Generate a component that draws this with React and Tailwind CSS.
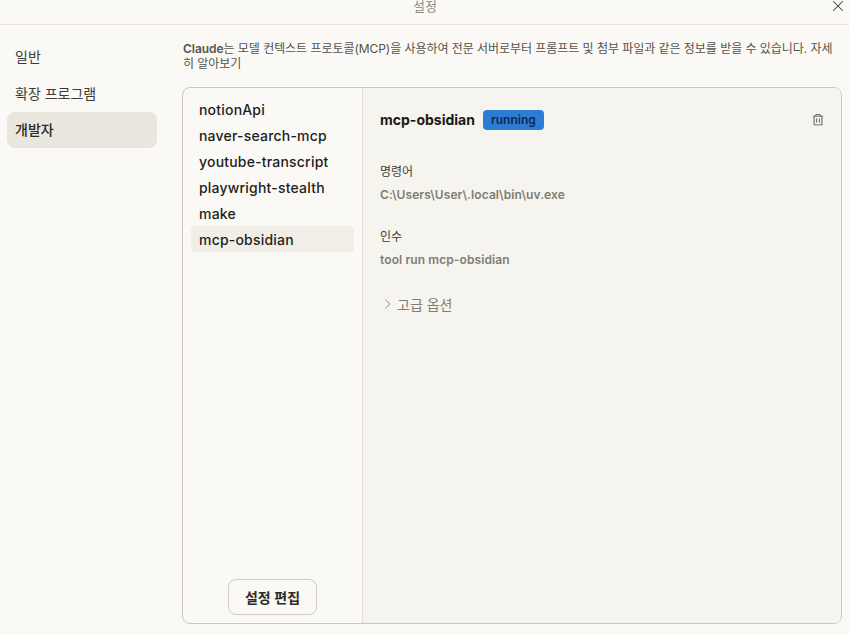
import { PiCaretRightLight, PiTrash, PiXLight } from 'react-icons/pi';

const NAV = ['일반', '확장 프로그램', '개발자'];
const SERVERS = ['notionApi', 'naver-search-mcp', 'youtube-transcript', 'playwright-stealth', 'make', 'mcp-obsidian'];
const FONT = { fontFamily: 'Inter, "Noto Sans CJK KR", sans-serif' };

export default function App() {
  return (
    <div className="h-[635px] w-[849px] overflow-hidden bg-[#faf9f5] text-[#2b2a27]" style={FONT}>
      {/* Title bar */}
      <header className="flex h-[25px] items-center border-b border-[#e6e4dd] pl-[20px]">
        <div className="flex-1 pb-[12px] text-center text-[13px] leading-none text-[#8a8880]">설정</div>
        <PiXLight size={16} className="mb-[12px] mr-[3px] text-[#222]" />
      </header>

      <div className="flex">
        {/* Sidebar */}
        <nav className="ml-[7px] mt-[14px] flex w-[150px] flex-col gap-[0.5px]">
          {NAV.map((item) => (
            <div
              key={item}
              className={`flex h-[36px] items-center rounded-lg px-[8px] pb-[1px] text-[14px] ${item === '개발자' ? 'bg-[#e9e6dd] font-medium text-[#2b2a27]' : 'text-[#3d3c37]'}`}
            >
              {item}
            </div>
          ))}
        </nav>

        {/* Content */}
        <main className="ml-[25px] mt-[16px] w-[660px]">
          <p className="h-[46px] pl-[1px] text-[12px] leading-[15px] tracking-[-0.05px] text-[#55534c]">
            <span className="font-semibold">Claude</span>는 모델 컨텍스트 프로토콜(MCP)을 사용하여 전문 서버로부터 프롬프트 및 첨부 파일과 같은 정보를 받을 수 있습니다. 자세히 알아보기
          </p>

          <div className="flex h-[537px] overflow-hidden rounded-lg border border-[#c9c7bf]">
            {/* Server list */}
            <div className="flex w-[180px] flex-col border-r border-[#e3e1d9] px-[8px] pb-[8px] pt-[8px]">
              {SERVERS.map((name) => (
                <div
                  key={name}
                  className={`flex h-[26px] items-center rounded px-[8px] text-[14px] font-medium tracking-[0.2px] text-[#1f1e1b] ${name === 'mcp-obsidian' ? 'bg-[#f0eee7]' : ''}`}
                >
                  {name}
                </div>
              ))}
              <button className="mx-auto mt-auto h-[36px] w-[89px] rounded-lg border border-[#cfcdc5] text-[14px] font-semibold text-[#2b2a27]">
                설정 편집
              </button>
            </div>

            {/* Server details */}
            <div className="flex-1 bg-[#f5f4ee] px-[17px] pt-[22px]">
              <div className="flex h-[20px] items-center">
                <h2 className="pb-[1px] text-[14px] font-bold text-[#1a1916]">mcp-obsidian</h2>
                <span className="ml-[8px] flex h-[20px] w-[61px] items-center justify-center rounded bg-[#2c7cd6] text-[12px] font-semibold text-[#10294a]">
                  running
                </span>
                <PiTrash size={14} className="ml-auto mr-[-1px] text-[#4a4842]" />
              </div>

              <div className="mt-[34px] text-[12px] leading-[16px] text-[#3d3c37]">명령어</div>
              <div className="mt-[7px] text-[12px] font-semibold leading-[16px] tracking-[0.1px] text-[#7f7d75]">C:\Users\User\.local\bin\uv.exe</div>

              <div className="mt-[26px] text-[12px] leading-[16px] text-[#3d3c37]">인수</div>
              <div className="mt-[7px] text-[12px] font-semibold leading-[16px] tracking-[0.1px] text-[#7f7d75]">tool run mcp-obsidian</div>

              <div className="mt-[26px] flex h-[20px] items-center text-[14px] text-[#7f7d75]">
                <PiCaretRightLight size={14} className="mr-[3px]" />
                고급 옵션
              </div>
            </div>
          </div>
        </main>
      </div>
    </div>
  );
}
